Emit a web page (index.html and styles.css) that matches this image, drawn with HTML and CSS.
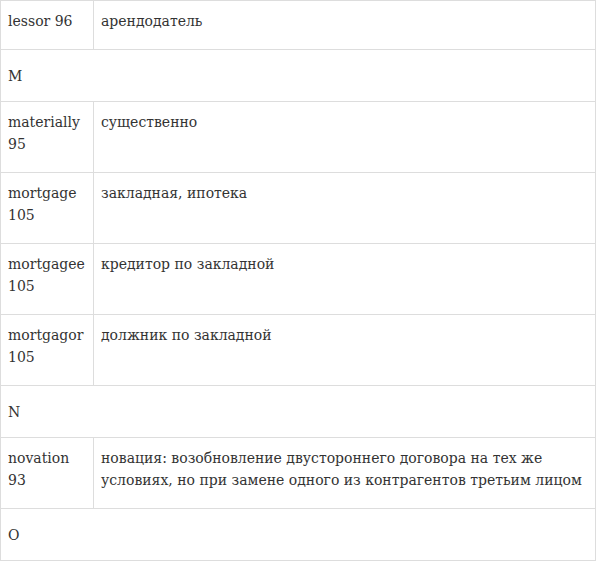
FILE: index.html
```html
<!DOCTYPE html>
<html lang="ru">
<head>
<meta charset="utf-8">
<link rel="stylesheet" href="styles.css">
</head>
<body>
<table class="gloss">
  <tr><td class="term">lessor 96</td><td class="def">арендодатель</td></tr>
  <tr><td class="letter" colspan="2">M</td></tr>
  <tr><td class="term">materially 95</td><td class="def">существенно</td></tr>
  <tr><td class="term">mortgage 105</td><td class="def">закладная, ипотека</td></tr>
  <tr><td class="term">mortgagee 105</td><td class="def">кредитор по закладной</td></tr>
  <tr><td class="term">mortgagor 105</td><td class="def">должник по закладной</td></tr>
  <tr><td class="letter" colspan="2">N</td></tr>
  <tr><td class="term">novation 93</td><td class="def">новация: возобновление двустороннего договора на тех же условиях, но при замене одного из контрагентов третьим лицом</td></tr>
  <tr><td class="letter" colspan="2">O</td></tr>
</table>
</body>
</html>
```
FILE: styles.css
```css
html, body {
  margin: 0;
  padding: 0;
  background: #fff;
}
.gloss {
  border-collapse: collapse;
  width: 596px;
  font-family: "DejaVu Serif", serif;
  font-size: 14px;
  line-height: 22px;
  color: #333;
}
.gloss td {
  border: 1px solid #ddd;
  padding: 9px 7px 17px 7px;
  vertical-align: top;
  text-align: left;
}
.gloss .term {
  width: 78px;
}
.gloss .letter {
  padding-top: 15px;
  padding-bottom: 14px;
}
```
